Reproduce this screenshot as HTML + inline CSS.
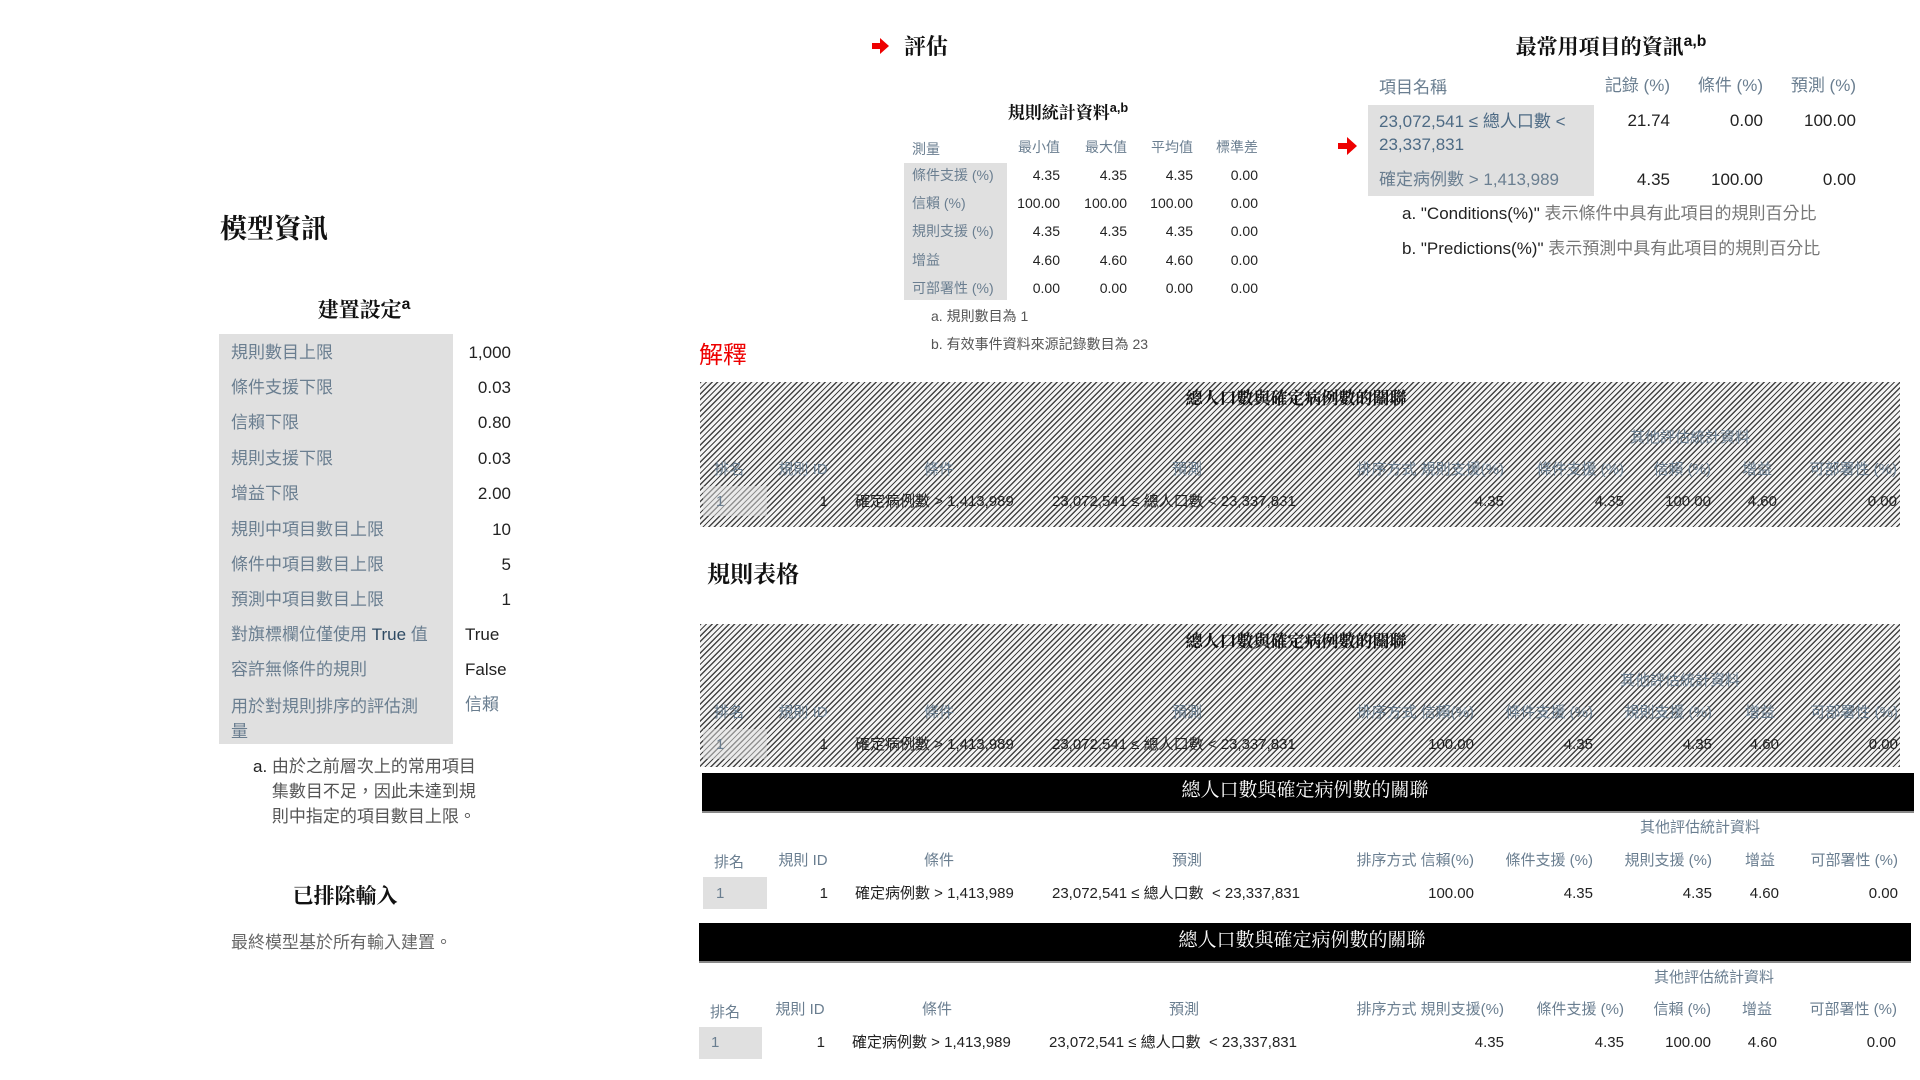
<!DOCTYPE html>
<html><head><meta charset="utf-8"><style>
body{margin:0;width:1920px;height:1080px;background:#fff;position:relative;overflow:hidden;font-family:"Liberation Sans","Noto Sans CJK TC",sans-serif;}
.t{position:absolute;white-space:nowrap;line-height:22px;}
.s{font-family:"Liberation Serif","Noto Serif CJK SC",serif;font-weight:bold;color:#111;}
.lb{color:#6a7e90;}
.v{color:#222;}
.g{position:absolute;background:#e0e0e0;}
.f17{font-size:17px}.f14{font-size:14px}.f15{font-size:15px}
.hatch{position:absolute;background:repeating-linear-gradient(135deg,#444 0 1.3px,#f4f4f4 1.3px 4px);}
.bar{position:absolute;background:#000;border-bottom:2px solid #888;}
.c{transform:translateX(-50%);}
sup{font-size:75%;font-family:"Liberation Sans",sans-serif;}
</style></head><body>

<!-- Left panel -->
<div class="t s" style="left:220px;top:215px;font-size:27px;line-height:28px;">模型資訊</div>
<div class="t s c" style="left:364px;top:292px;font-size:21px;line-height:26px;">建置設定<sup>a</sup></div>
<div class="g" style="left:219px;top:334px;width:234px;height:410px;"></div>
<div class="t f17 lb" style="left:231px;top:342px;">規則數目上限</div><div class="t f17 v" style="right:1409px;top:342px;">1,000</div>
<div class="t f17 lb" style="left:231px;top:377px;">條件支援下限</div><div class="t f17 v" style="right:1409px;top:377px;">0.03</div>
<div class="t f17 lb" style="left:231px;top:412px;">信賴下限</div><div class="t f17 v" style="right:1409px;top:412px;">0.80</div>
<div class="t f17 lb" style="left:231px;top:448px;">規則支援下限</div><div class="t f17 v" style="right:1409px;top:448px;">0.03</div>
<div class="t f17 lb" style="left:231px;top:483px;">增益下限</div><div class="t f17 v" style="right:1409px;top:483px;">2.00</div>
<div class="t f17 lb" style="left:231px;top:519px;">規則中項目數目上限</div><div class="t f17 v" style="right:1409px;top:519px;">10</div>
<div class="t f17 lb" style="left:231px;top:554px;">條件中項目數目上限</div><div class="t f17 v" style="right:1409px;top:554px;">5</div>
<div class="t f17 lb" style="left:231px;top:589px;">預測中項目數目上限</div><div class="t f17 v" style="right:1409px;top:589px;">1</div>
<div class="t f17 lb" style="left:231px;top:624px;">對旗標欄位僅使用 <span style="color:#2e4a63">True</span> 值</div><div class="t f17 v" style="left:465px;top:624px;">True</div>
<div class="t f17 lb" style="left:231px;top:659px;">容許無條件的規則</div><div class="t f17 v" style="left:465px;top:659px;">False</div>
<div class="t f17 lb" style="left:231px;top:694px;line-height:25px;white-space:normal;width:200px;">用於對規則排序的評估測量</div><div class="t f17 lb" style="left:465px;top:694px;">信賴</div>
<div class="t f17" style="left:253px;top:754px;color:#555;line-height:25px;"><span style="color:#222">a.</span> 由於之前層次上的常用項目<br>&nbsp;&nbsp;&nbsp;&nbsp;集數目不足，因此未達到規<br>&nbsp;&nbsp;&nbsp;&nbsp;則中指定的項目數目上限。</div>
<div class="t s c" style="left:345px;top:883px;font-size:21px;line-height:26px;">已排除輸入</div>
<div class="t f17" style="left:231px;top:932px;color:#666;">最終模型基於所有輸入建置。</div>

<!-- 評估 -->
<svg style="position:absolute;left:872px;top:38px" width="18" height="16"><path d="M0 5h8V0l9 8-9 8v-5H0z" fill="#e00"/></svg>
<div class="t s" style="left:904px;top:35px;font-size:22px;line-height:24px;">評估</div>
<div class="t s c" style="left:1068px;top:97px;font-size:17px;">規則統計資料<sup>a,b</sup></div>
<div class="g" style="left:904px;top:163px;width:103px;height:137px;"></div>
<div class="t f14 lb" style="left:912px;top:138px;">測量</div>
<div class="t f14 lb" style="right:860px;top:136px;">最小值</div><div class="t f14 lb" style="right:793px;top:136px;">最大值</div><div class="t f14 lb" style="right:727px;top:136px;">平均值</div><div class="t f14 lb" style="right:662px;top:136px;">標準差</div>
<div class="t f14 lb" style="left:912px;top:164px;">條件支援 (%)</div><div class="t f14 v" style="right:860px;top:164px;">4.35</div><div class="t f14 v" style="right:793px;top:164px;">4.35</div><div class="t f14 v" style="right:727px;top:164px;">4.35</div><div class="t f14 v" style="right:662px;top:164px;">0.00</div>
<div class="t f14 lb" style="left:912px;top:192px;">信賴 (%)</div><div class="t f14 v" style="right:860px;top:192px;">100.00</div><div class="t f14 v" style="right:793px;top:192px;">100.00</div><div class="t f14 v" style="right:727px;top:192px;">100.00</div><div class="t f14 v" style="right:662px;top:192px;">0.00</div>
<div class="t f14 lb" style="left:912px;top:220px;">規則支援 (%)</div><div class="t f14 v" style="right:860px;top:220px;">4.35</div><div class="t f14 v" style="right:793px;top:220px;">4.35</div><div class="t f14 v" style="right:727px;top:220px;">4.35</div><div class="t f14 v" style="right:662px;top:220px;">0.00</div>
<div class="t f14 lb" style="left:912px;top:249px;">增益</div><div class="t f14 v" style="right:860px;top:249px;">4.60</div><div class="t f14 v" style="right:793px;top:249px;">4.60</div><div class="t f14 v" style="right:727px;top:249px;">4.60</div><div class="t f14 v" style="right:662px;top:249px;">0.00</div>
<div class="t f14 lb" style="left:912px;top:277px;">可部署性 (%)</div><div class="t f14 v" style="right:860px;top:277px;">0.00</div><div class="t f14 v" style="right:793px;top:277px;">0.00</div><div class="t f14 v" style="right:727px;top:277px;">0.00</div><div class="t f14 v" style="right:662px;top:277px;">0.00</div>
<div class="t f14" style="left:931px;top:305px;color:#555;">a. 規則數目為 1</div>
<div class="t f14" style="left:931px;top:333px;color:#555;">b. 有效事件資料來源記錄數目為 23</div>

<!-- 最常用項目 -->
<div class="t s c" style="left:1611px;top:29px;font-size:21px;line-height:26px;">最常用項目的資訊<sup>a,b</sup></div>
<div class="t f17 lb" style="left:1379px;top:77px;">項目名稱</div>
<div class="t f17 lb" style="right:250px;top:75px;">記錄 (%)</div><div class="t f17 lb" style="right:157px;top:75px;">條件 (%)</div><div class="t f17 lb" style="right:64px;top:75px;">預測 (%)</div>
<div class="g" style="left:1368px;top:105px;width:226px;height:91px;"></div>
<div class="t f17 lb" style="left:1379px;top:110px;line-height:23px;color:#4d6a84;">23,072,541 ≤ 總人口數 &lt;<br>23,337,831</div>
<div class="t f17 v" style="right:250px;top:110px;">21.74</div><div class="t f17 v" style="right:157px;top:110px;">0.00</div><div class="t f17 v" style="right:64px;top:110px;">100.00</div>
<div class="t f17 lb" style="left:1379px;top:169px;">確定病例數 &gt; 1,413,989</div>
<div class="t f17 v" style="right:250px;top:169px;">4.35</div><div class="t f17 v" style="right:157px;top:169px;">100.00</div><div class="t f17 v" style="right:64px;top:169px;">0.00</div>
<svg style="position:absolute;left:1338px;top:137px" width="19" height="18"><path d="M0 6h9V0l10 9-10 9v-6H0z" fill="#e00"/></svg>
<div class="t f17" style="left:1402px;top:203px;color:#777;"><span style="color:#222">a. "Conditions(%)"</span> 表示條件中具有此項目的規則百分比</div>
<div class="t f17" style="left:1402px;top:238px;color:#777;"><span style="color:#222">b. "Predictions(%)"</span> 表示預測中具有此項目的規則百分比</div>

<div class="t" style="left:699px;top:342px;font-size:24px;line-height:28px;color:#e00;">解釋</div>

<!-- hatch 1 -->
<div class="hatch" style="left:700px;top:382px;width:1200px;height:145px;"></div>
<div class="t s c f17" style="left:1296px;top:388px;">總人口數與確定病例數的關聯</div>
<div class="t f15 lb c" style="left:1690px;top:427px;">其他評估統計資料</div>
<div class="t f15 lb" style="left:714px;top:459px;">排名</div><div class="t f15 lb c" style="left:803px;top:459px;">規則 ID</div><div class="t f15 lb c" style="left:939px;top:459px;">條件</div><div class="t f15 lb c" style="left:1187px;top:459px;">預測</div>
<div class="t f15 lb" style="right:416px;top:459px;">排序方式 規則支援(%)</div><div class="t f15 lb" style="right:296px;top:459px;">條件支援 (%)</div><div class="t f15 lb" style="right:209px;top:459px;">信賴 (%)</div><div class="t f15 lb c" style="left:1757px;top:459px;">增益</div><div class="t f15 lb" style="right:23px;top:459px;">可部署性 (%)</div>
<div class="g" style="left:703px;top:486px;width:64px;height:30px;opacity:.5"></div>
<div class="t f15 lb" style="left:716px;top:491px;">1</div><div class="t f15 v" style="right:1092px;top:491px;">1</div><div class="t f15 v" style="left:855px;top:491px;">確定病例數 &gt; 1,413,989</div><div class="t f15 v" style="left:1052px;top:491px;">23,072,541 ≤ 總人口數 &lt; 23,337,831</div>
<div class="t f15 v" style="right:416px;top:491px;">4.35</div><div class="t f15 v" style="right:296px;top:491px;">4.35</div><div class="t f15 v" style="right:209px;top:491px;">100.00</div><div class="t f15 v" style="right:143px;top:491px;">4.60</div><div class="t f15 v" style="right:23px;top:491px;">0.00</div>

<div class="t s" style="left:707px;top:561px;font-size:23px;line-height:28px;">規則表格</div>

<!-- hatch 2 -->
<div class="hatch" style="left:700px;top:624px;width:1200px;height:143px;"></div>
<div class="t s c f17" style="left:1296px;top:631px;">總人口數與確定病例數的關聯</div>
<div class="t f15 lb c" style="left:1680px;top:670px;">其他評估統計資料</div>
<div class="t f15 lb" style="left:714px;top:702px;">排名</div><div class="t f15 lb c" style="left:803px;top:702px;">規則 ID</div><div class="t f15 lb c" style="left:939px;top:702px;">條件</div><div class="t f15 lb c" style="left:1187px;top:702px;">預測</div>
<div class="t f15 lb" style="right:446px;top:702px;">排序方式 信賴(%)</div><div class="t f15 lb" style="right:327px;top:702px;">條件支援 (%)</div><div class="t f15 lb" style="right:208px;top:702px;">規則支援 (%)</div><div class="t f15 lb c" style="left:1760px;top:702px;">增益</div><div class="t f15 lb" style="right:22px;top:702px;">可部署性 (%)</div>
<div class="g" style="left:703px;top:729px;width:64px;height:30px;opacity:.5"></div>
<div class="t f15 lb" style="left:716px;top:734px;">1</div><div class="t f15 v" style="right:1092px;top:734px;">1</div><div class="t f15 v" style="left:855px;top:734px;">確定病例數 &gt; 1,413,989</div><div class="t f15 v" style="left:1052px;top:734px;">23,072,541 ≤ 總人口數 &lt; 23,337,831</div>
<div class="t f15 v" style="right:446px;top:734px;">100.00</div><div class="t f15 v" style="right:327px;top:734px;">4.35</div><div class="t f15 v" style="right:208px;top:734px;">4.35</div><div class="t f15 v" style="right:141px;top:734px;">4.60</div><div class="t f15 v" style="right:22px;top:734px;">0.00</div>

<!-- black table 1 -->
<div class="bar" style="left:702px;top:773px;width:1212px;height:38px;"></div>
<div class="t c" style="left:1305px;top:779px;color:#fff;font-size:19px;line-height:24px;font-family:'Liberation Serif','Noto Serif CJK SC',serif;">總人口數與確定病例數的關聯</div>
<div class="t f15 lb c" style="left:1700px;top:817px;">其他評估統計資料</div>
<div class="t f15 lb" style="left:714px;top:852px;">排名</div><div class="t f15 lb c" style="left:803px;top:850px;">規則 ID</div><div class="t f15 lb c" style="left:939px;top:850px;">條件</div><div class="t f15 lb c" style="left:1187px;top:850px;">預測</div>
<div class="t f15 lb" style="right:446px;top:850px;">排序方式 信賴(%)</div><div class="t f15 lb" style="right:327px;top:850px;">條件支援 (%)</div><div class="t f15 lb" style="right:208px;top:850px;">規則支援 (%)</div><div class="t f15 lb c" style="left:1760px;top:850px;">增益</div><div class="t f15 lb" style="right:22px;top:850px;">可部署性 (%)</div>
<div class="g" style="left:703px;top:877px;width:64px;height:32px;"></div>
<div class="t f15 lb" style="left:716px;top:883px;">1</div><div class="t f15 v" style="right:1092px;top:883px;">1</div><div class="t f15 v" style="left:855px;top:883px;">確定病例數 &gt; 1,413,989</div><div class="t f15 v" style="left:1052px;top:883px;">23,072,541 ≤ 總人口數 &nbsp;&lt; 23,337,831</div>
<div class="t f15 v" style="right:446px;top:883px;">100.00</div><div class="t f15 v" style="right:327px;top:883px;">4.35</div><div class="t f15 v" style="right:208px;top:883px;">4.35</div><div class="t f15 v" style="right:141px;top:883px;">4.60</div><div class="t f15 v" style="right:22px;top:883px;">0.00</div>

<!-- black table 2 -->
<div class="bar" style="left:699px;top:923px;width:1212px;height:38px;"></div>
<div class="t c" style="left:1302px;top:929px;color:#fff;font-size:19px;line-height:24px;font-family:'Liberation Serif','Noto Serif CJK SC',serif;">總人口數與確定病例數的關聯</div>
<div class="t f15 lb c" style="left:1714px;top:967px;">其他評估統計資料</div>
<div class="t f15 lb" style="left:710px;top:1002px;">排名</div><div class="t f15 lb c" style="left:800px;top:999px;">規則 ID</div><div class="t f15 lb c" style="left:937px;top:999px;">條件</div><div class="t f15 lb c" style="left:1184px;top:999px;">預測</div>
<div class="t f15 lb" style="right:416px;top:999px;">排序方式 規則支援(%)</div><div class="t f15 lb" style="right:296px;top:999px;">條件支援 (%)</div><div class="t f15 lb" style="right:209px;top:999px;">信賴 (%)</div><div class="t f15 lb c" style="left:1757px;top:999px;">增益</div><div class="t f15 lb" style="right:23px;top:999px;">可部署性 (%)</div>
<div class="g" style="left:699px;top:1027px;width:63px;height:32px;"></div>
<div class="t f15 lb" style="left:711px;top:1032px;">1</div><div class="t f15 v" style="right:1095px;top:1032px;">1</div><div class="t f15 v" style="left:852px;top:1032px;">確定病例數 &gt; 1,413,989</div><div class="t f15 v" style="left:1049px;top:1032px;">23,072,541 ≤ 總人口數 &nbsp;&lt; 23,337,831</div>
<div class="t f15 v" style="right:416px;top:1032px;">4.35</div><div class="t f15 v" style="right:296px;top:1032px;">4.35</div><div class="t f15 v" style="right:209px;top:1032px;">100.00</div><div class="t f15 v" style="right:143px;top:1032px;">4.60</div><div class="t f15 v" style="right:24px;top:1032px;">0.00</div>
</body></html>
